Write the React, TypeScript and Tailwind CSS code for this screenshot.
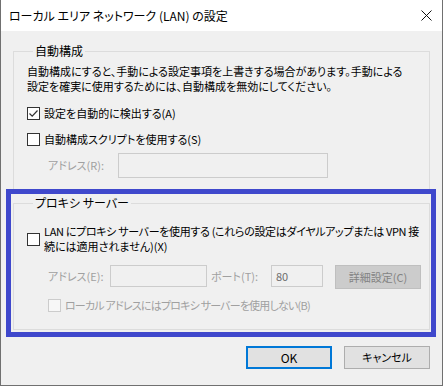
import React from "react";

function CheckBox({ checked = false, disabled = false }: { checked?: boolean; disabled?: boolean }) {
  return (
    <span
      className={
        "flex h-[13px] w-[13px] shrink-0 items-center justify-center border " +
        (disabled ? "border-[#cccccc] bg-[#f7f7f7]" : "border-[#333333] bg-white")
      }
    >
      {checked && (
        <svg width="11" height="11" viewBox="0 0 11 11">
          <path d="M1.5 5.5 L4.2 8.2 L9.5 2.5" fill="none" stroke="#333333" strokeWidth="1.2" />
        </svg>
      )}
    </span>
  );
}

export default function App() {
  return (
    <div className="relative flex h-[386px] w-[443px] flex-col border-x border-b border-[#707070] bg-[#f0f0f0] font-['Noto_Sans_CJK_JP','Noto_Sans',sans-serif] text-[11px] text-black [font-feature-settings:'palt']">
      {/* title bar */}
      <div className="flex h-[31px] shrink-0 items-center justify-between bg-white pl-[8px] pr-[9px]">
        <span className="text-[12px] leading-[16px]">ローカル エリア ネットワーク (LAN) の設定</span>
        <svg width="11" height="11" viewBox="0 0 11 11" className="mr-[1px]">
          <path d="M0.5 0.5 L10.5 10.5 M10.5 0.5 L0.5 10.5" stroke="#111" strokeWidth="1" />
        </svg>
      </div>

      <div className="flex flex-col px-[12px]">
        {/* 自動構成 */}
        <fieldset className="mt-[12px] border border-[#dcdcdc] pb-[11px] pl-[13px]">
          <legend className="ml-[6px] px-[2px] text-[12px] leading-[16px]">自動構成</legend>
          <div className="pt-[5px] leading-[15px]">
            <div className="whitespace-nowrap">自動構成にすると、手動による設定事項を上書きする場合があります。手動による</div>
            <div className="whitespace-nowrap">設定を確実に使用するためには、自動構成を無効にしてください。</div>
          </div>
          <label className="mt-[11px] flex h-[16px] items-center gap-[4px] leading-[16px]">
            <CheckBox checked />
            <span>設定を自動的に検出する(A)</span>
          </label>
          <label className="mt-[10px] flex h-[16px] items-center gap-[4px] leading-[16px]">
            <CheckBox />
            <span>自動構成スクリプトを使用する(S)</span>
          </label>
          <div className="mt-[6px] ml-[21px] flex items-center">
            <span className="w-[70px] text-[#a0a0a0]">アドレス(R):</span>
            <div className="h-[25px] w-[210px] border border-[#cccccc] bg-[#f0f0f0]" />
          </div>
        </fieldset>

        {/* プロキシ サーバー */}
        <fieldset className="mt-[5px] border border-[#dcdcdc] pb-[16px] pl-[13px]">
          <legend className="ml-[6px] px-[2px] text-[12px] leading-[16px]">プロキシ サーバー</legend>
          <label className="mt-[13px] flex items-center gap-[4px]">
            <CheckBox />
            <span className="leading-[15px]">
              <span className="block whitespace-nowrap tracking-[-0.33px]">LAN にプロキシ サーバーを使用する (これらの設定はダイヤルアップまたは VPN 接</span>
              <span className="block whitespace-nowrap">続には適用されません)(X)</span>
            </span>
          </label>
          <div className="mt-[11px] ml-[21px] flex items-start">
            <span className="w-[62px] leading-[22px] text-[#a0a0a0]">アドレス(E):</span>
            <div className="h-[22px] w-[97px] border border-[#cccccc] bg-[#f0f0f0]" />
            <span className="ml-[4px] w-[60px] leading-[22px] text-[#a0a0a0]">ポート(T):</span>
            <div className="flex h-[22px] w-[52px] items-center border border-[#cccccc] bg-[#f0f0f0] pl-[4px] text-[#6d6d6d]">80</div>
            <button className="ml-[12px] h-[24px] w-[86px] border border-[#bfbfbf] bg-[#cccccc] text-[#838383]">詳細設定(C)</button>
          </div>
          <label className="mt-[8px] ml-[21px] flex h-[16px] items-center gap-[4px] text-[#a0a0a0]">
            <CheckBox disabled />
            <span className="whitespace-nowrap tracking-[-0.8px]">ローカル アドレスにはプロキシ サーバーを使用しない(B)</span>
          </label>
        </fieldset>

        {/* buttons */}
        <div className="mt-[16px] flex justify-end gap-[12px]">
          <button className="h-[23px] w-[86px] border-2 border-[#0078d7] bg-[#e1e1e1] text-[12px]">OK</button>
          <button className="h-[23px] w-[86px] border border-[#adadad] bg-[#e1e1e1]">キャンセル</button>
        </div>
      </div>

      {/* highlight annotation */}
      <div className="pointer-events-none absolute left-[5px] top-[189px] h-[148px] w-[430px] border-[5px] border-[#3f48cc]" />
    </div>
  );
}
